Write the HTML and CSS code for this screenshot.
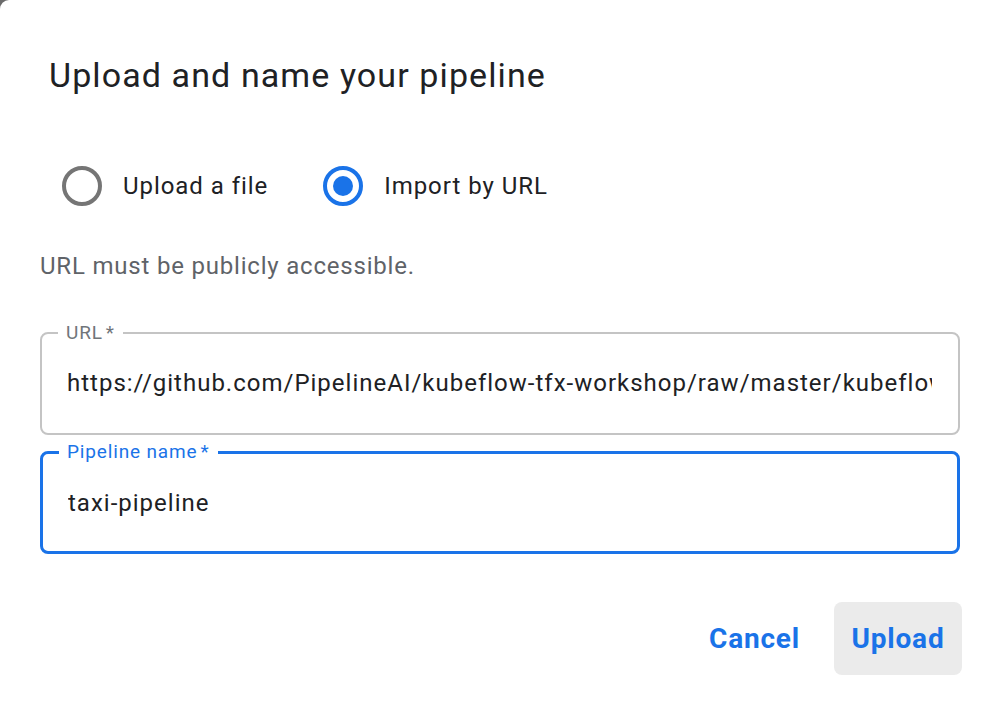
FILE: index.html
```html
<!DOCTYPE html>
<html lang="en">
<head>
<meta charset="utf-8">
<title>Upload and name your pipeline</title>
<link rel="stylesheet" href="styles.css">
</head>
<body>
<div class="dialog">
  <h1 class="title">Upload and name your pipeline</h1>
  <div class="radios">
    <label class="radio">
      <span class="circle"></span>
      <span class="radio-label">Upload a file</span>
    </label>
    <label class="radio radio-second">
      <span class="circle checked"><span class="dot"></span></span>
      <span class="radio-label">Import by URL</span>
    </label>
  </div>
  <p class="helper">URL must be publicly accessible.</p>
  <fieldset class="field">
    <legend class="field-label">URL<span class="req">*</span></legend>
    <div class="field-value">https://github.com/PipelineAI/kubeflow-tfx-workshop/raw/master/kubeflow-pipelines/taxi-pipeline.tar.gz</div>
  </fieldset>
  <fieldset class="field field-focused">
    <legend class="field-label">Pipeline name<span class="req">*</span></legend>
    <div class="field-value">taxi-pipeline</div>
  </fieldset>
  <div class="actions">
    <button class="btn">Cancel</button>
    <button class="btn btn-disabled">Upload</button>
  </div>
</div>
</body>
</html>
```
FILE: styles.css
```css
html, body {
  margin: 0;
  padding: 0;
  background: #6b6b6b;
}
body {
  font-family: Roboto, "Liberation Sans", Arial, sans-serif;
  color: #202124;
}
.dialog {
  background: #ffffff;
  min-height: 710px;
  box-sizing: border-box;
  border-top-left-radius: 9px;
  padding: 55px 34px 0 40px;
}
.title {
  margin: 0 0 0 9px;
  font-size: 34px;
  font-weight: 400;
  line-height: 40px;
  letter-spacing: 1.1px;
  color: #202124;
}
.radios {
  display: flex;
  align-items: center;
  margin-top: 71px;
  height: 40px;
}
.radio {
  display: flex;
  align-items: center;
  gap: 21px;
  margin-left: 22px;
}
.radio-second {
  margin-left: 55px;
}
.circle {
  width: 40px;
  height: 40px;
  box-sizing: border-box;
  border: 4px solid #757575;
  border-radius: 50%;
  display: flex;
  align-items: center;
  justify-content: center;
}
.circle.checked {
  border-color: #1a73e8;
}
.dot {
  width: 20px;
  height: 20px;
  border-radius: 50%;
  background: #1a73e8;
}
.radio-label {
  font-size: 24px;
  line-height: 30px;
  letter-spacing: 0.95px;
  color: #202124;
}
.helper {
  margin: 45px 0 0 0;
  font-size: 24px;
  line-height: 30px;
  letter-spacing: 0.8px;
  color: #5f6368;
}
.field {
  margin: 41px 2px 0 0;
  padding: 0 16px;
  border: 2px solid #c4c4c4;
  border-radius: 8px;
  min-width: 0;
}
.field-label {
  padding: 0 8px;
  font-size: 19px;
  line-height: 22px;
  letter-spacing: 0.85px;
  color: #70757a;
}
.req {
  margin-left: 3px;
}
.field-value {
  margin: 24px 10px 35px 9px;
  font-size: 24px;
  line-height: 30px;
  letter-spacing: 1px;
  color: #202124;
  white-space: nowrap;
  overflow: hidden;
}
.field-focused {
  margin-top: 6px;
  border: 3px solid #1a73e8;
  padding: 0 16px;
}
.field-focused .field-label {
  color: #1a73e8;
}
.field-focused .field-value {
  margin: 25px 10px 33px 9px;
}
.actions {
  display: flex;
  justify-content: flex-end;
  align-items: center;
  gap: 17px;
  margin-top: 48px;
}
.btn {
  font-family: Roboto, "Liberation Sans", Arial, sans-serif;
  font-size: 28px;
  font-weight: 700;
  letter-spacing: 0.8px;
  color: #1a73e8;
  background: transparent;
  border: none;
  border-radius: 8px;
  height: 73px;
  padding: 0 17px;
  cursor: pointer;
}
.btn-disabled {
  background: #ebebeb;
  width: 128px;
}
```
